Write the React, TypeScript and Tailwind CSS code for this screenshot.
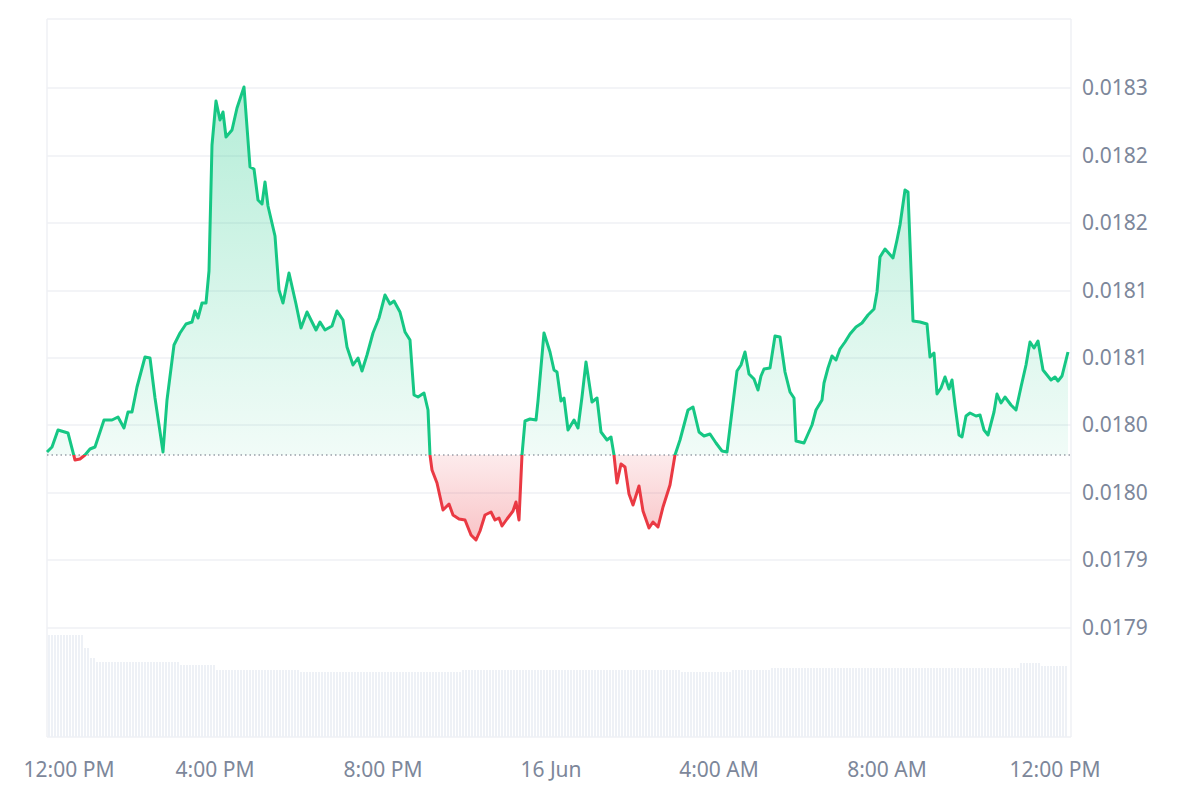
const PTS = "47,452 52,447 58,430 68,433 75,460 80,459 85,455 90,449 95,447 104,420 112,420 118,417 124,428 128,412 132,412 137,387 145,357 150,358 155,398 163,452 167,400 174,345 180,333 186,324 192,322 195,311 198,318 202,303 206,303 209,271 212,145 216,101 220,120 223,112 226,137 232,130 237,108 244,87 250,167 254,169 258,200 262,204 265,182 268,206 275,236 279,290 283,303 289,273 296,304 301,328 307,312 316,330 320,322 325,330 332,326 337,311 343,320 347,347 353,365 358,358 362,371 367,355 373,333 379,318 385,295 390,304 394,301 400,312 405,332 410,340 414,395 418,397 424,393 428,410 430,455 432,470 437,483 443,510 449,504 453,515 459,519 465,520 471,535 476,540 480,531 485,515 491,512 495,520 499,518 502,526 507,519 513,511 516,502 519,520 522,455 525,421 530,419 536,420 538,401 544,333 550,352 554,370 557,372 561,401 564,398 568,430 574,420 578,428 582,397 586,362 592,402 597,398 601,432 607,440 611,437 614,455 617,483 621,464 625,467 629,494 633,505 639,486 643,511 649,528 653,522 658,527 663,507 670,485 675,455 680,440 684,425 688,410 693,407 699,432 704,436 710,434 716,443 722,451 727,452 733,403 737,371 741,365 745,352 749,374 754,379 758,390 761,376 764,369 770,368 775,336 780,337 785,372 790,392 794,398 796,441 804,443 812,425 816,410 822,400 824,383 828,368 832,356 836,360 840,349 845,342 850,334 856,327 862,323 868,315 874,309 877,292 880,257 885,249 893,258 897,240 900,225 905,190 908,192 913,321 920,322 927,324 930,357 934,353 937,394 941,388 945,377 949,389 952,380 955,405 959,435 962,437 966,416 970,413 976,416 980,415 984,430 988,435 994,412 997,394 1001,403 1005,397 1011,405 1016,410 1021,387 1026,365 1030,342 1034,348 1038,341 1043,370 1047,375 1051,380 1055,377 1058,381 1062,376 1068,352";

const BASE = 455;
const GRID = [88, 156, 223, 291, 358, 425, 493, 560, 628];
const YLABELS = ["0.0183", "0.0182", "0.0182", "0.0181", "0.0181", "0.0180", "0.0180", "0.0179", "0.0179"];
const XLABELS: [number, string][] = [
  [69, "12:00 PM"], [215, "4:00 PM"], [383, "8:00 PM"], [551, "16 Jun"],
  [719, "4:00 AM"], [887, "8:00 AM"], [1055, "12:00 PM"],
];

function volTop(x: number) {
  if (x < 84) return 635;
  if (x < 88) return 648;
  if (x < 95) return 658;
  if (x < 180) return 662;
  if (x < 215) return 665;
  if (x < 300) return 670;
  if (x < 460) return 672;
  if (x < 680) return 670;
  if (x < 730) return 672;
  if (x < 770) return 670;
  if (x < 1020) return 668;
  if (x < 1040) return 663;
  return 666;
}

const bars = Array.from({ length: 340 }, (_, i) => 48 + i * 3).filter((x) => x < 1070);

export default function App() {
  const area = `M47,${BASE} L${PTS.split(" ").join(" L")} L1068,${BASE} Z`;
  return (
    <div className="w-[1200px] h-[800px] bg-white font-['Liberation_Sans',Arial,sans-serif]">
      <svg width="1200" height="800" viewBox="0 0 1200 800">
        <defs>
          <linearGradient id="g" x1="0" y1="87" x2="0" y2={BASE} gradientUnits="userSpaceOnUse">
            <stop offset="0" stopColor="#16c784" stopOpacity="0.32" />
            <stop offset="1" stopColor="#16c784" stopOpacity="0.06" />
          </linearGradient>
          <linearGradient id="r" x1="0" y1={BASE} x2="0" y2="540" gradientUnits="userSpaceOnUse">
            <stop offset="0" stopColor="#ea3943" stopOpacity="0.1" />
            <stop offset="1" stopColor="#ea3943" stopOpacity="0.3" />
          </linearGradient>
          <clipPath id="up"><rect x="0" y="0" width="1200" height={BASE} /></clipPath>
          <clipPath id="down"><rect x="0" y={BASE} width="1200" height="400" /></clipPath>
        </defs>
        <line x1="47" y1="19" x2="1071" y2="19" stroke="#eff1f4" strokeWidth="1.5" />
        {GRID.map((y) => (
          <line key={y} x1="47" y1={y} x2="1071" y2={y} stroke="#eff1f4" strokeWidth="1.5" />
        ))}
        <line x1="47" y1="19" x2="47" y2="737" stroke="#eff1f4" strokeWidth="1.5" />
        <line x1="1071" y1="19" x2="1071" y2="737" stroke="#eff1f4" strokeWidth="1.5" />
        <line x1="47" y1="737" x2="1071" y2="737" stroke="#eff1f4" strokeWidth="1.5" />
        {bars.map((x) => (
          <rect key={x} x={x} y={volTop(x)} width="2" height={737 - volTop(x)} fill="#eef1f6" />
        ))}
        <path d={area} fill="url(#g)" clipPath="url(#up)" />
        <path d={area} fill="url(#r)" clipPath="url(#down)" />
        <line x1="47" y1={BASE} x2="1071" y2={BASE} stroke="#6b7280" strokeWidth="1.2" strokeDasharray="1.5 3" />
        <polyline points={PTS} fill="none" stroke="#16c784" strokeWidth="3" strokeLinejoin="round" clipPath="url(#up)" />
        <polyline points={PTS} fill="none" stroke="#ea3943" strokeWidth="3" strokeLinejoin="round" clipPath="url(#down)" />
        {GRID.map((y, i) => (
          <text key={y} x="1082" y={y + 7} fontSize="21" fill="#7d879a">{YLABELS[i]}</text>
        ))}
        {XLABELS.map(([x, t]) => (
          <text key={t + x} x={x} y="777" fontSize="21" fill="#7d879a" textAnchor="middle">{t}</text>
        ))}
      </svg>
    </div>
  );
}
